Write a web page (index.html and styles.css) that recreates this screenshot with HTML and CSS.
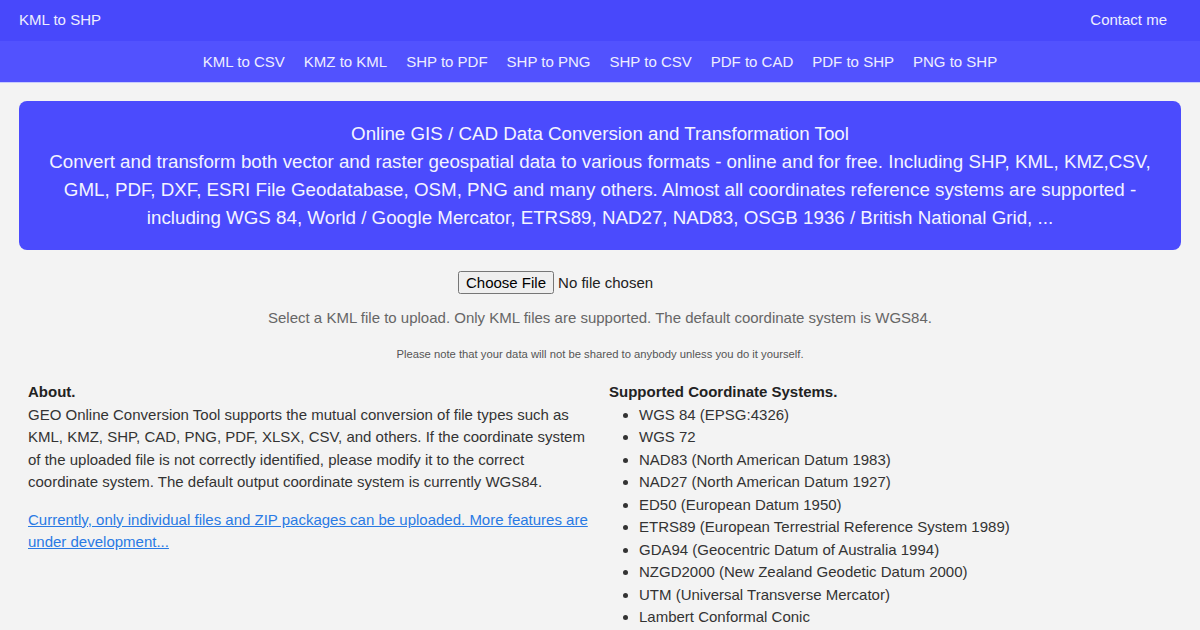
FILE: index.html
```html
<!DOCTYPE html>
<html lang="en">
<head>
<meta charset="utf-8">
<title>KML to SHP</title>
<link rel="stylesheet" href="styles.css">
</head>
<body>
<header class="topbar">
  <a class="brand" href="#">KML to SHP</a>
  <a class="contact" href="#">Contact me</a>
</header>
<nav class="subnav">
  <a href="#">KML to CSV</a>
  <a href="#">KMZ to KML</a>
  <a href="#">SHP to PDF</a>
  <a href="#">SHP to PNG</a>
  <a href="#">SHP to CSV</a>
  <a href="#">PDF to CAD</a>
  <a href="#">PDF to SHP</a>
  <a href="#">PNG to SHP</a>
</nav>
<main class="main">
  <section class="banner">
    <div>Online GIS / CAD Data Conversion and Transformation Tool</div>
    <div>Convert and transform both vector and raster geospatial data to various formats - online and for free. Including SHP, KML, KMZ,CSV, GML, PDF, DXF, ESRI File Geodatabase, OSM, PNG and many others. Almost all coordinates reference systems are supported - including WGS 84, World / Google Mercator, ETRS89, NAD27, NAD83, OSGB 1936 / British National Grid, ...</div>
  </section>
  <section class="upload">
    <input class="file" type="file" accept=".kml">
    <p class="help">Select a KML file to upload. Only KML files are supported. The default coordinate system is WGS84.</p>
    <p class="note">Please note that your data will not be shared to anybody unless you do it yourself.</p>
  </section>
  <section class="info">
    <div class="col">
      <h3 class="col-title">About.</h3>
      <p class="col-text">GEO Online Conversion Tool supports the mutual conversion of file types such as KML, KMZ, SHP, CAD, PNG, PDF, XLSX, CSV, and others. If the coordinate system of the uploaded file is not correctly identified, please modify it to the correct coordinate system. The default output coordinate system is currently WGS84.</p>
      <p class="col-text"><a class="link" href="#">Currently, only individual files and ZIP packages can be uploaded. More features are under development...</a></p>
    </div>
    <div class="col">
      <h3 class="col-title">Supported Coordinate Systems.</h3>
      <ul class="cs-list">
        <li>WGS 84 (EPSG:4326)</li>
        <li>WGS 72</li>
        <li>NAD83 (North American Datum 1983)</li>
        <li>NAD27 (North American Datum 1927)</li>
        <li>ED50 (European Datum 1950)</li>
        <li>ETRS89 (European Terrestrial Reference System 1989)</li>
        <li>GDA94 (Geocentric Datum of Australia 1994)</li>
        <li>NZGD2000 (New Zealand Geodetic Datum 2000)</li>
        <li>UTM (Universal Transverse Mercator)</li>
        <li>Lambert Conformal Conic</li>
      </ul>
    </div>
  </section>
</main>
</body>
</html>
```

FILE: styles.css
```css
* { box-sizing: border-box; }
html, body { margin: 0; padding: 0; }
body {
  background: #f3f3f3;
  font-family: "Liberation Sans", Arial, sans-serif;
  color: #333;
  font-size: 15px;
}
a { text-decoration: none; color: inherit; }

.topbar {
  height: 41px;
  background: #4848fb;
  display: flex;
  align-items: center;
  justify-content: space-between;
  padding: 0 33px 2px 19px;
  color: #eeeeff;
  font-size: 15px;
}

.subnav {
  height: 42px;
  background: #5252fe;
  border-bottom: 1px solid #c7cbff;
  display: flex;
  align-items: center;
  justify-content: center;
  padding-bottom: 1px;
  color: #eeeeff;
  font-size: 15px;
}
.subnav a { padding: 0 9.5px; }

.main { padding: 18px 19px 0; }

.banner {
  background: #4b4bfd;
  color: #f4f4ff;
  border-radius: 8px;
  text-align: center;
  font-size: 18.75px;
  line-height: 28px;
  padding: 19px 20px 18px;
}

.upload {
  text-align: center;
  padding-top: 21px;
}
.file {
  font-family: "Liberation Sans", Arial, sans-serif;
  font-size: 15px;
  color: #222;
  height: 26px;
}
.help {
  margin: 10px 0 0;
  color: #666;
  font-size: 15px;
  line-height: 22px;
}
.note {
  margin: 18px 0 0;
  color: #555;
  font-size: 11.25px;
  line-height: 14px;
}

.info {
  display: grid;
  grid-template-columns: 1fr 1fr;
  padding-top: 20px;
}
.col { padding: 0 9px; }
.col-title {
  margin: 0;
  font-size: 15px;
  line-height: 22.5px;
  font-weight: bold;
  color: #222;
}
.col-text {
  margin: 0 0 15px;
  line-height: 22.5px;
  color: #333;
}
.link {
  color: #2a7ae4;
  text-decoration: underline;
}
.cs-list {
  margin: 0;
  padding-left: 30px;
  line-height: 22.5px;
  color: #333;
}
```
